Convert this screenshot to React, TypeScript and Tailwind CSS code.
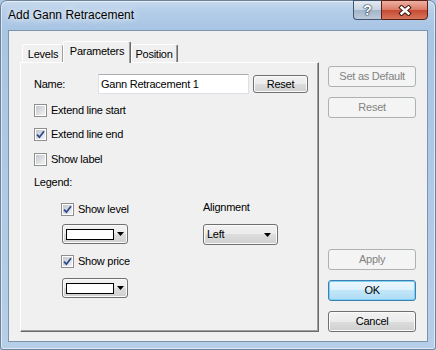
import React from 'react';

const btnFace =
  'bg-[linear-gradient(180deg,#f2f2f2_0%,#ebebeb_50%,#dddddd_50%,#cfcfcf_100%)] shadow-[inset_0_0_0_1px_#fbfbfb]';

const CheckMark: React.FC = () => (
  <svg width="9" height="9" viewBox="0 0 9 9">
    <path d="M1 4.6 L3.4 7.2 L8 1.2" fill="none" stroke="#2b4b8e" strokeWidth="1.8" />
  </svg>
);

const CheckRow: React.FC<{ label: string; checked?: boolean; className?: string }> = ({
  label,
  checked,
  className = '',
}) => (
  <div className={`flex h-[13px] items-center gap-[4px] ${className}`}>
    <span className="flex h-[13px] w-[13px] shrink-0 border border-[#8e8f8f] bg-white p-[1px]">
      <span className="flex h-full w-full items-center justify-center bg-[linear-gradient(135deg,#c2c6cc,#f3f3f4)]">
        {checked && <CheckMark />}
      </span>
    </span>
    <span className="leading-[13px]">{label}</span>
  </div>
);

const DownArrow: React.FC = () => (
  <svg width="7" height="4" viewBox="0 0 7 4" className="shrink-0">
    <polygon points="0,0 7,0 3.5,4" fill="#000" />
  </svg>
);

const ColorCombo: React.FC<{ className?: string }> = ({ className = '' }) => (
  <div
    className={`flex h-[20px] w-[66px] items-center rounded-[3px] border border-[#707070] pl-[3px] ${btnFace} ${className}`}
  >
    <span className="h-[11px] w-[48px] border border-black bg-white" />
    <span className="ml-[3px]">
      <DownArrow />
    </span>
  </div>
);

const Button: React.FC<{ label: string; variant?: 'normal' | 'disabled' | 'default'; className?: string }> = ({
  label,
  variant = 'normal',
  className = '',
}) => {
  const look =
    variant === 'disabled'
      ? 'border-[#adb2b5] bg-[#f4f4f4] text-[#838383]'
      : variant === 'default'
        ? 'border-[#3c7fb1] bg-[linear-gradient(180deg,#ecf7fd_0%,#dbf0fc_50%,#c2e6f9_50%,#aedcf4_100%)] shadow-[inset_0_0_0_1px_#7fd0f7] text-black'
        : `border-[#707070] ${btnFace} text-black`;
  return (
    <div className={`flex items-center justify-center rounded-[3px] border leading-[13px] ${look} ${className}`}>
      {label}
    </div>
  );
};

const App: React.FC = () => {
  return (
    <div className="h-[350px] w-[436px] bg-[#a9c6e4] font-['Liberation_Sans',Arial,sans-serif] text-[11px] tracking-[-0.25px] text-black">
      <div className="flex h-full w-full flex-col rounded-t-[7px] rounded-b-[3px] border border-[#6e8299] bg-[linear-gradient(180deg,#c8dbef_0px,#b4cde8_10px,#a8c5e4_28px,#b6cee8_100%)] shadow-[inset_0_0_0_1px_rgba(255,255,255,0.55)]">
        {/* Title bar */}
        <div className="flex h-[29px] shrink-0 items-start pr-[7px]">
          <div className="flex-1 pl-[7px] pt-[7px] text-[12px] leading-[15px] tracking-normal [text-shadow:0_0_6px_rgba(255,255,255,0.95),0_0_10px_rgba(255,255,255,0.8)]">
            Add Gann Retracement
          </div>
          <div className="-mt-px flex h-[20px]">
            <div className="flex w-[28px] items-center justify-center rounded-bl-[4px] border border-r-0 border-[#41556f] bg-[linear-gradient(180deg,#e3eaf2_0%,#c8d5e3_48%,#a3b5ca_52%,#bccbdb_100%)] pb-[1px] text-[14px] font-bold leading-[14px] text-white [text-shadow:0_0_1px_#243449,0_0_1px_#243449,0_0_2px_#243449]">
              ?
            </div>
            <div className="flex w-[47px] items-center justify-center rounded-br-[4px] border border-[#5b2015] bg-[linear-gradient(180deg,#eeb0a2_0%,#dc7c68_48%,#c74a33_52%,#d7775c_100%)]">
              <svg width="14" height="11" viewBox="0 0 14 11">
                <path d="M3.5 2.5 L10.5 8.5 M10.5 2.5 L3.5 8.5" stroke="#3b1710" strokeWidth="4.4" strokeLinecap="square" />
                <path d="M3.5 2.5 L10.5 8.5 M10.5 2.5 L3.5 8.5" stroke="#ffffff" strokeWidth="2.4" strokeLinecap="square" />
              </svg>
            </div>
          </div>
        </div>

        {/* Client area */}
        <div className="mx-[7px] mb-[7px] flex flex-1 border border-[#7e93ad] bg-[#f0f0f0] px-[11px] pb-[9px] pt-[10px]">
          {/* Tab control */}
          <div className="flex w-[300px] flex-col">
            <div className="flex items-end pl-[2px]">
              <div className="h-[18px] w-[41px] rounded-t-[2px] border-l border-t border-white pt-[3px] text-center leading-[13px] shadow-[inset_-1px_0_0_#a0a0a0]">
                Levels
              </div>
              <div className="relative z-10 -mb-px h-[22px] w-[68px] rounded-t-[2px] border-l border-r border-t border-l-white border-r-[#696969] border-t-white bg-[#f0f0f0] pt-[3px] text-center leading-[13px] shadow-[inset_-1px_0_0_#a0a0a0]">
                Parameters
              </div>
              <div className="h-[18px] w-[47px] rounded-t-[2px] border-r border-t border-r-[#696969] border-t-white pt-[3px] text-center leading-[13px] shadow-[inset_-1px_0_0_#a0a0a0,inset_1px_0_0_#ffffff]">
                Position
              </div>
            </div>

            <div className="flex flex-1 flex-col border border-b-[#696969] border-l-white border-r-[#696969] border-t-white pl-[13px] pt-[11px] shadow-[inset_-1px_-1px_0_#a0a0a0]">
              <div className="flex h-[20px] items-center">
                <span className="w-[64px] leading-[13px]">Name:</span>
                <div className="flex h-[20px] w-[151px] items-center border border-[#dde1e7] border-t-[#abadb3] bg-white pl-[2px] leading-[13px]">
                  Gann Retracement 1
                </div>
                <Button label="Reset" className="ml-[4px] h-[18px] w-[55px]" />
              </div>

              <CheckRow label="Extend line start" className="mt-[10px]" />
              <CheckRow label="Extend line end" checked className="mt-[11px]" />
              <CheckRow label="Show label" className="mt-[12px]" />
              <div className="mt-[10px] h-[13px] leading-[13px]">Legend:</div>

              <div className="mt-[14px] flex pl-[27px]">
                <div className="flex w-[142px] flex-col">
                  <CheckRow label="Show level" checked />
                  <ColorCombo className="ml-[1px] mt-[8px]" />
                  <CheckRow label="Show price" checked className="mt-[11px]" />
                  <ColorCombo className="ml-[1px] mt-[10px]" />
                </div>
                <div className="flex flex-col">
                  <div className="-mt-[2px] h-[13px] leading-[13px]">Alignment</div>
                  <div
                    className={`mt-[10px] flex h-[21px] w-[75px] items-center rounded-[3px] border border-[#707070] pl-[3px] pr-[6px] leading-[13px] ${btnFace}`}
                  >
                    <span className="flex-1">Left</span>
                    <DownArrow />
                  </div>
                </div>
              </div>
            </div>
          </div>

          {/* Right buttons */}
          <div className="ml-[9px] flex w-[88px] flex-col justify-between pt-[25px]">
            <div className="flex flex-col gap-[10px]">
              <Button label="Set as Default" variant="disabled" className="h-[21px]" />
              <Button label="Reset" variant="disabled" className="h-[21px]" />
            </div>
            <div className="flex flex-col gap-[10px]">
              <Button label="Apply" variant="disabled" className="h-[21px]" />
              <Button label="OK" variant="default" className="h-[21px]" />
              <Button label="Cancel" className="h-[21px]" />
            </div>
          </div>
        </div>
      </div>
    </div>
  );
};

export default App;
